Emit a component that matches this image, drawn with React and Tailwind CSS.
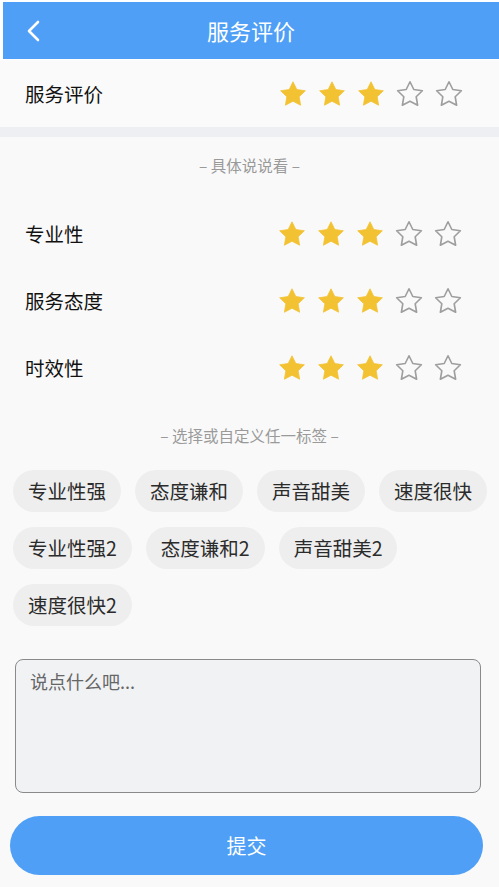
import React, { useState } from 'react';

const STAR = '12,2.2 15.05,8.4 21.9,9.4 16.95,14.2 18.1,21 12,17.8 5.9,21 7.05,14.2 2.1,9.4 8.95,8.4';

const Star = ({ filled }) => (
  <svg width="30" height="30" viewBox="0 0 24 24">
    {filled ? (
      <polygon points={STAR} fill="#f3c232" stroke="#f3c232" strokeWidth="0.6" strokeLinejoin="round" />
    ) : (
      <polygon points={STAR} fill="none" stroke="#9e9e9e" strokeWidth="1.3" strokeLinejoin="round" />
    )}
  </svg>
);

const Stars = ({ value, onChange }) => (
  <div className="flex gap-[9px]">
    {[1, 2, 3, 4, 5].map(n => (
      <button key={n} type="button" onClick={() => onChange(n)} className="block">
        <Star filled={n <= value} />
      </button>
    ))}
  </div>
);

const tags = ['专业性强', '态度谦和', '声音甜美', '速度很快', '专业性强2', '态度谦和2', '声音甜美2', '速度很快2'];

const App = () => {
  const [service, setService] = useState(3);
  const [scores, setScores] = useState({ pro: 3, attitude: 3, speed: 3 });
  const [selected, setSelected] = useState([]);
  const [comment, setComment] = useState('');

  const rows = [
    { key: 'pro', label: '专业性' },
    { key: 'attitude', label: '服务态度' },
    { key: 'speed', label: '时效性' },
  ];

  const toggleTag = (t) => {
    setSelected(s => (s.includes(t) ? s.filter(x => x !== t) : [...s, t]));
  };

  return (
    <div
      className="w-[499px] h-[887px] bg-[#f9f9f9] overflow-hidden flex flex-col"
      style={{ fontFamily: '"Noto Sans CJK SC", "Noto Sans", sans-serif' }}
    >
      {/* header */}
      <div className="h-[60px] pt-[2px] bg-white shrink-0">
        <div className="h-[57px] ml-[3px] bg-[#4e9ff5] flex items-center relative">
          <svg className="absolute left-[20px] top-[17px]" width="22" height="24" viewBox="0 0 22 24">
            <path d="M15 3 L6 12 L15 21" fill="none" stroke="white" strokeWidth="2.6" strokeLinecap="round" strokeLinejoin="round" />
          </svg>
          <div className="flex-1 text-center text-white text-[22px]">服务评价</div>
        </div>
      </div>

      {/* overall */}
      <div className="h-[67px] shrink-0 flex items-center justify-between pl-[25px] pr-[35px] bg-[#fafafa]">
        <span className="text-[19.5px] text-[#111]">服务评价</span>
        <Stars value={service} onChange={setService} />
      </div>
      <div className="h-[10px] shrink-0 bg-[#eeeff2]" />

      <div className="h-[58px] shrink-0 flex items-center justify-center text-[15.5px] text-[#9a9a9a]">
        – 具体说说看 –
      </div>

      <div className="mt-[5px]">
        {rows.map(r => (
          <div key={r.key} className="h-[67px] flex items-center justify-between pl-[25px] pr-[36px]">
            <span className="text-[19.5px] text-[#111]">{r.label}</span>
            <Stars value={scores[r.key]} onChange={v => setScores(s => ({ ...s, [r.key]: v }))} />
          </div>
        ))}
      </div>

      <div className="h-[69px] shrink-0 flex items-center justify-center text-[15.5px] text-[#9a9a9a]">
        – 选择或自定义任一标签 –
      </div>

      <div className="flex flex-wrap gap-x-[14px] gap-y-[15px] pl-[13px] pr-[8px]">
        {tags.map(t => (
          <button
            key={t}
            type="button"
            onClick={() => toggleTag(t)}
            className={`h-[42px] px-[15px] rounded-full text-[19.5px] ${
              selected.includes(t) ? 'bg-[#4e9ff5] text-white' : 'bg-[#eeeeee] text-[#2b2b2b]'
            }`}
          >
            {t}
          </button>
        ))}
      </div>

      <div className="pl-[15px] pr-[18px] mt-[33px]">
        <textarea
          value={comment}
          onChange={e => setComment(e.target.value)}
          placeholder="说点什么吧..."
          className="block w-full h-[134px] resize-none rounded-[8px] border border-[#8a8a8a] bg-[#f1f2f4] px-[14px] py-[8px] text-[18px] text-[#333] placeholder:text-[#666] outline-none"
        />
      </div>

      <div className="pl-[10px] pr-[16px] mt-[23px]">
        <button type="button" className="w-full h-[59px] rounded-full bg-[#4e9ff5] text-white text-[20px]">
          提交
        </button>
      </div>
    </div>
  );
};

export default App;
